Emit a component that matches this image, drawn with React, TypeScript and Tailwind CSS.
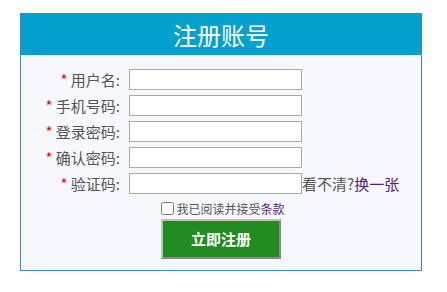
import { useState } from "react";

const fields = [
  { label: "用户名", type: "text" },
  { label: "手机号码", type: "text" },
  { label: "登录密码", type: "password" },
  { label: "确认密码", type: "password" },
];

export default function App() {
  const [agree, setAgree] = useState(false);

  return (
    <div
      className="w-[447px] h-[292px] bg-white pt-[13px] pl-[20px]"
      style={{ fontFamily: '"Noto Sans CJK SC", "Liberation Sans", sans-serif' }}
    >
      <div className="w-[402px] h-[258px] border border-[#3a86c8] bg-[#f7f8fd]">
        {/* Header */}
        <div className="h-[41px] bg-[#03a1cd] flex items-center justify-center text-white text-[24px] leading-none">
          注册账号
        </div>

        {/* Form */}
        <div className="pt-[14px] flex flex-col gap-[5px]">
          {fields.map((f) => (
            <div key={f.label} className="flex items-center h-[21px]">
              <label className="w-[99px] text-right text-[15px] leading-none text-[#555]">
                <span className="text-[#f00]">*</span> {f.label}:
              </label>
              <input
                type={f.type}
                className="ml-[9px] w-[173px] h-[21px] border border-[#a9a9a9] bg-white outline-none px-1 text-[13px]"
              />
            </div>
          ))}
          <div className="flex items-center h-[21px]">
            <label className="w-[99px] text-right text-[15px] leading-none text-[#555]">
              <span className="text-[#f00]">*</span> 验证码:
            </label>
            <input
              type="text"
              className="ml-[9px] w-[173px] h-[21px] border border-[#a9a9a9] bg-white outline-none px-1 text-[13px]"
            />
            <span className="text-[15px] leading-none text-[#555] whitespace-nowrap">
              看不清?<a href="#" className="text-[#551a8b]">换一张</a>
            </span>
          </div>
        </div>

        {/* Agreement */}
        <div className="mt-[6px] h-[17px] flex items-center justify-center pl-[4px]">
          <input
            type="checkbox"
            checked={agree}
            onChange={() => setAgree(!agree)}
            className="w-[13px] h-[13px] m-0 mr-[2px]"
          />
          <span className="text-[12px] leading-none text-[#555]">
            我已阅读并接受<a href="#" className="text-[#551a8b]">条款</a>
          </span>
        </div>

        <div className="mt-[2px] flex justify-center">
          <button className="w-[120px] h-[40px] bg-[#228b22] border-2 border-[#c0c0c0] border-b-[#8a8a8a] border-r-[#8a8a8a] text-white text-[15px] font-bold">
            立即注册
          </button>
        </div>
      </div>
    </div>
  );
}
